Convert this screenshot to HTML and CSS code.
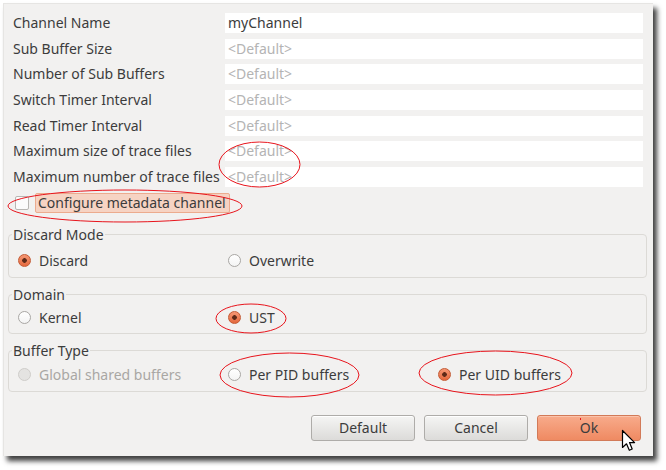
FILE: index.html
```html
<!DOCTYPE html>
<html>
<head>
<meta charset="utf-8">
<link rel="stylesheet" href="styles.css">
</head>
<body>
<div class="dialog">
  <div class="form">
    <label class="lbl">Channel Name</label><div class="field">myChannel</div>
    <label class="lbl">Sub Buffer Size</label><div class="field ph">&lt;Default&gt;</div>
    <label class="lbl">Number of Sub Buffers</label><div class="field ph">&lt;Default&gt;</div>
    <label class="lbl">Switch Timer Interval</label><div class="field ph">&lt;Default&gt;</div>
    <label class="lbl">Read Timer Interval</label><div class="field ph">&lt;Default&gt;</div>
    <label class="lbl">Maximum size of trace files</label><div class="field ph">&lt;Default&gt;</div>
    <label class="lbl">Maximum number of trace files</label><div class="field ph">&lt;Default&gt;</div>
  </div>
  <div class="check-row">
    <span class="checkbox"></span>
    <span class="check-label">Configure metadata channel</span>
  </div>
  <fieldset class="group g1">
    <legend>Discard Mode</legend>
    <div class="opts">
      <span class="opt"><span class="radio on"></span>Discard</span>
      <span class="opt"><span class="radio"></span>Overwrite</span>
    </div>
  </fieldset>
  <fieldset class="group g2">
    <legend>Domain</legend>
    <div class="opts">
      <span class="opt"><span class="radio"></span>Kernel</span>
      <span class="opt"><span class="radio on"></span>UST</span>
    </div>
  </fieldset>
  <fieldset class="group g3">
    <legend>Buffer Type</legend>
    <div class="opts">
      <span class="opt disabled"><span class="radio"></span>Global shared buffers</span>
      <span class="opt"><span class="radio"></span>Per PID buffers</span>
      <span class="opt"><span class="radio on"></span>Per UID buffers</span>
    </div>
  </fieldset>
  <div class="buttons">
    <button class="btn">Default</button>
    <button class="btn">Cancel</button>
    <button class="btn primary">Ok</button>
  </div>
  <svg class="cursor" width="16" height="24" viewBox="0 0 16 24">
    <path d="M1.5 1.5 L1.5 18.5 L5.5 14.8 L8.3 21.3 L11.2 20 L8.5 13.6 L13.6 13.6 Z" fill="#fff" stroke="#000" stroke-width="1.2" stroke-linejoin="round"/>
  </svg>
</div>
<svg class="marks" width="666" height="470" viewBox="0 0 666 470">
  <g fill="none" stroke="#e8141c" stroke-width="1">
    <ellipse cx="259.5" cy="164.5" rx="40.5" ry="22.5"/>
    <ellipse cx="125" cy="206" rx="117" ry="16"/>
    <ellipse cx="251" cy="318.5" rx="35" ry="14.5"/>
    <ellipse cx="289.5" cy="375" rx="69.5" ry="22"/>
    <ellipse cx="495.5" cy="373" rx="76.5" ry="22"/>
    <line x1="580.5" y1="418" x2="580.5" y2="420"/>
  </g>
</svg>
</body>
</html>
```

FILE: styles.css
```css
* { box-sizing: border-box; }
html, body {
  margin: 0;
  padding: 0;
  background: #ffffff;
  width: 666px;
  height: 470px;
  overflow: hidden;
}
body {
  font-family: "Noto Sans", "DejaVu Sans", sans-serif;
  font-size: 14px;
  color: #3c3c3c;
  position: relative;
}
.dialog {
  position: relative;
  margin: 3px 0 0 3px;
  width: 650px;
  height: 453px;
  background: #f2f1f0;
  border-top: 1px solid #e6e5e3;
  border-left: 1px solid #e6e5e3;
  box-shadow: 4px 5px 5px rgba(0, 0, 0, 0.75);
  padding-top: 9px;
}
.form {
  margin: 0 10px 0 9px;
  display: grid;
  grid-template-columns: 212px 1fr;
  grid-auto-rows: 20px;
  row-gap: 5.67px;
}
.lbl {
  line-height: 20px;
  white-space: nowrap;
}
.field {
  background: #ffffff;
  line-height: 20px;
  padding-left: 3px;
  color: #3c3c3c;
}
.field.ph { color: #b4b4b4; }

.check-row {
  display: flex;
  align-items: center;
  height: 20px;
  margin: 6px 0 0 11px;
}
.checkbox {
  width: 14px;
  height: 14px;
  background: #fbfbfb;
  border: 1px solid #b8b6b3;
  border-radius: 2px;
  margin-right: 6px;
}
.check-label {
  display: inline-block;
  height: 20px;
  line-height: 18px;
  padding: 0 3px 0 2px;
  background: #f6d3c3;
  border: 1px solid #ecab8e;
  border-radius: 2px;
}

.group {
  margin: 8px 6px 0 4px;
  padding: 5px 0 7px 9px;
  border: 1px solid #dcdad6;
  border-radius: 4px;
  min-width: 0;
}
.g1 { margin-top: 13px; padding-top: 8px; }
.g2 { padding-top: 5px; padding-bottom: 6px; }
.g3 { margin-top: 8px; padding-top: 6px; }
.group legend {
  padding: 0 1px;
  margin-left: -6px;
  line-height: 18px;
  color: #3c3c3c;
}
.opts {
  display: grid;
  grid-template-columns: 210px 210px 210px;
  height: 18px;
  align-items: center;
}
.opt {
  display: flex;
  align-items: center;
  line-height: 18px;
  white-space: nowrap;
}
.radio {
  width: 13px;
  height: 13px;
  border-radius: 50%;
  border: 1px solid #a9a7a4;
  background: linear-gradient(#ffffff, #f4f4f4);
  margin-right: 8px;
  flex: none;
}
.radio.on {
  border-color: #c45a34;
  background: radial-gradient(circle, #5e2a18 0, #5e2a18 2px, transparent 2.6px),
              linear-gradient(#f59774, #e4683d);
}
.opt.disabled { color: #a9a7a4; }
.opt.disabled .radio {
  background: #e4e3e1;
  border-color: #cfcdca;
}

.buttons {
  display: flex;
  justify-content: flex-end;
  gap: 9px;
  margin: 23px 12px 0 0;
}
.btn {
  width: 104px;
  height: 26px;
  font-family: inherit;
  font-size: 14px;
  color: #3c3c3c;
  background: linear-gradient(#f5f5f4, #dcdbd9);
  border: 1px solid #aeaca9;
  border-radius: 3px;
  padding: 0;
  box-shadow: inset 0 1px 0 #ffffff;
}
.btn.primary {
  background: linear-gradient(#f8ab8b, #ef8a62);
  border-color: #d27a58;
  box-shadow: inset 0 1px 0 #fbc3ab;
}
.cursor {
  position: absolute;
  left: 617px;
  top: 425px;
}
.marks {
  position: absolute;
  left: 0;
  top: 0;
  pointer-events: none;
}
```
